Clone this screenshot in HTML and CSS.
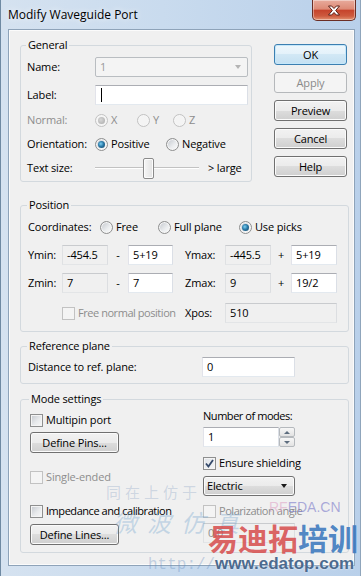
FILE: index.html
```html
<!DOCTYPE html>
<html lang="en">
<head>
    <meta charset="UTF-8">
    <meta name="viewport" content="width=device-width, initial-scale=1.0">
    <title>Modify Waveguide Port</title>
    <link rel="stylesheet" href="styles.css">
</head>
<body>
    <div class="window">
        <div class="titlebar">
            <span class="title">Modify Waveguide Port</span>
            <button class="close" aria-label="Close">
                <svg width="14" height="11" viewBox="0 0 14 11">
                    <path d="M1.5 1 H4.6 L7 3.5 L9.4 1 H12.5 L8.7 5.5 L12.5 10 H9.4 L7 7.5 L4.6 10 H1.5 L5.3 5.5 Z" fill="#fff" stroke="#5a1e14" stroke-width="1" stroke-linejoin="round"/>
                </svg>
            </button>
        </div>

        <div class="client">
            <div class="top">
                <fieldset class="group general">
                    <legend>General</legend>
                    <div class="row">
                        <span class="label">Name:</span>
                        <div class="combo disabled"><span>1</span><span class="arrow"></span></div>
                    </div>
                    <div class="row mt8">
                        <span class="label">Label:</span>
                        <div class="field"><span class="caret"></span></div>
                    </div>
                    <div class="row mt5">
                        <span class="label gray">Normal:</span>
                        <div class="options">
                            <span class="opt w42"><span class="radio checked disabled"></span><span class="gray">X</span></span>
                            <span class="opt w36"><span class="radio disabled"></span><span class="gray">Y</span></span>
                            <span class="opt"><span class="radio disabled"></span><span class="gray">Z</span></span>
                        </div>
                    </div>
                    <div class="row mt4">
                        <span class="label">Orientation:</span>
                        <div class="options">
                            <span class="opt w71"><span class="radio checked"></span>Positive</span>
                            <span class="opt"><span class="radio"></span>Negative</span>
                        </div>
                    </div>
                    <div class="row slider-row mt3">
                        <span class="label">Text size:</span>
                        <div class="options">
                            <div class="slider"><span class="thumb"></span></div>
                            <span class="slider-text">&gt; large</span>
                        </div>
                    </div>
                </fieldset>

                <div class="buttons">
                    <button class="btn default">OK</button>
                    <button class="btn" disabled>Apply</button>
                    <button class="btn">Preview</button>
                    <button class="btn">Cancel</button>
                    <button class="btn">Help</button>
                </div>
            </div>

            <fieldset class="group position">
                <legend>Position</legend>
                <div class="coords">
                    <span class="coords-label">Coordinates:</span>
                    <span class="opt w58"><span class="radio"></span>Free</span>
                    <span class="opt w81"><span class="radio"></span>Full plane</span>
                    <span class="opt"><span class="radio checked"></span>Use picks</span>
                </div>
                <div class="range mt8">
                    <span>Ymin:</span>
                    <div class="field ro">-454.5</div>
                    <span class="op">-</span>
                    <div class="field">5+19</div>
                    <span class="range-label">Ymax:</span>
                    <div class="field ro">-445.5</div>
                    <span class="op">+</span>
                    <div class="field">5+19</div>
                </div>
                <div class="range mt8">
                    <span>Zmin:</span>
                    <div class="field ro">7</div>
                    <span class="op">-</span>
                    <div class="field">7</div>
                    <span class="range-label">Zmax:</span>
                    <div class="field ro">9</div>
                    <span class="op">+</span>
                    <div class="field">19/2</div>
                </div>
                <div class="range xpos mt10">
                    <span></span>
                    <span class="opt"><span class="check disabled"></span><span class="gray tight">Free normal position</span></span>
                    <span class="range-label">Xpos:</span>
                    <div class="field ro">510</div>
                </div>
            </fieldset>

            <fieldset class="group refplane">
                <legend>Reference plane</legend>
                <div class="ref-row">
                    <span class="ref-label">Distance to ref. plane:</span>
                    <div class="field">0</div>
                </div>
            </fieldset>

            <fieldset class="group modes">
                <legend>Mode settings</legend>
                <div class="mode-cols">
                    <div class="mode-left">
                        <span class="opt line mt5"><span class="check"></span>Multipin port</span>
                        <button class="btn wide mt4">Define Pins...</button>
                        <span class="opt line mt16"><span class="check disabled"></span><span class="gray">Single-ended</span></span>
                        <span class="opt line mt18"><span class="check"></span><span class="tight">Impedance and calibration</span></span>
                        <button class="btn wide mt5">Define Lines...</button>
                    </div>
                    <div class="mode-right">
                        <span class="line tight mt1">Number of modes:</span>
                        <div class="spin mt3">
                            <div class="field">1</div>
                            <div class="spin-btns">
                                <span class="spin-btn up"></span>
                                <span class="spin-btn down"></span>
                            </div>
                        </div>
                        <span class="opt line mt8"><span class="check checked"><svg width="9" height="9" viewBox="0 0 9 9"><path d="M1 4.5 L3.4 7.5 L8 1" fill="none" stroke="#34496a" stroke-width="1.8"/></svg></span>Ensure shielding</span>
                        <div class="dropdown mt5"><span>Electric</span><span class="arrow dark"></span></div>
                        <span class="opt line mt7"><span class="check disabled"></span><span class="gray tight">Polarization angle</span></span>
                        <div class="field ro gray mt4">0.0</div>
                    </div>
                </div>
            </fieldset>
        </div>

        <div class="watermark">
            <span class="wm-small">同在上仿于</span>
            <span class="wm-faint">微波仿真</span>
            <span class="wm-site">RF<b>EDA.CN</b></span>
            <span class="wm-big"><em>易迪拓</em>培训</span>
            <span class="wm-http">http://</span>
            <span class="wm-url">www.edatop.com</span>
        </div>
    </div>
</body>
</html>
```

FILE: styles.css
```css
* {
    box-sizing: border-box;
}

body {
    margin: 0;
    font-family: "Open Sans", "Noto Sans", sans-serif;
    font-size: 11px;
    line-height: 16px;
    letter-spacing: -0.15px;
    color: #000;
}

.tight {
    letter-spacing: -0.45px;
}

.window {
    position: relative;
    width: 361px;
    height: 576px;
    overflow: hidden;
    display: flex;
    flex-direction: column;
    background: linear-gradient(to right, #d5e2f0 0%, #c9dbee 45%, #b9d0ea 100%);
    border-left: 1px solid #6f8aa3;
    border-right: 1px solid #8fa5bb;
}

/* title bar */
.titlebar {
    height: 29px;
    display: flex;
    align-items: flex-start;
}

.title {
    padding: 7px 0 0 7px;
    font-size: 12px;
    letter-spacing: 0;
    text-shadow: 0 0 6px #fff;
}

.close {
    margin-left: auto;
    margin-right: 4px;
    width: 44px;
    height: 21px;
    padding: 0;
    display: flex;
    align-items: center;
    justify-content: center;
    border: 1px solid #6b2e25;
    border-top: none;
    border-radius: 0 0 5px 5px;
    background: linear-gradient(#e8ab9c 0%, #dd8a76 45%, #c6442c 52%, #cd5a3e 80%, #e39372 100%);
    box-shadow: inset 0 0 0 1px rgba(255, 255, 255, 0.4);
}

/* client area */
.client {
    height: 537px;
    margin: 0 5px 0 7px;
    padding: 0 4px 0 11px;
    background: #f0f0f0;
    border: 1px solid #8ea3b9;
    box-shadow: inset 0 0 0 1px #fbfbfb;
}

.top {
    display: flex;
    align-items: flex-start;
    margin-top: 7px;
}

.group {
    margin: 0;
    border: 1px solid #d3d9de;
    border-radius: 3px;
    min-width: 0;
}

.group legend {
    padding: 0 2px;
    margin-left: -1px;
    line-height: 16px;
}

.general {
    width: 232px;
    padding: 4px 3px 2px 6px;
}

.buttons {
    display: flex;
    flex-direction: column;
    gap: 7px;
    margin-left: 22px;
    padding-top: 7px;
}

.buttons .btn {
    width: 73px;
}

.row {
    display: grid;
    grid-template-columns: 68px 1fr;
    align-items: center;
    height: 20px;
}

.slider-row {
    height: 22px;
}

.options {
    display: flex;
    align-items: center;
}

.opt {
    display: inline-flex;
    align-items: center;
    gap: 3px;
    white-space: nowrap;
}

.w36 { width: 36px; }
.w42 { width: 42px; }
.w58 { width: 58px; }
.w71 { width: 71px; }
.w81 { width: 81px; }

.mt1 { margin-top: 1px; }
.mt3 { margin-top: 3px; }
.mt4 { margin-top: 4px; }
.mt5 { margin-top: 5px; }
.mt7 { margin-top: 7px; }
.mt8 { margin-top: 8px; }
.mt10 { margin-top: 10px; }
.mt16 { margin-top: 16px; }
.mt18 { margin-top: 18px; }

.gray {
    color: #8d8d8d;
}

/* text fields */
.field {
    height: 20px;
    padding: 0 4px;
    line-height: 18px;
    background: #fff;
    border: 1px solid;
    border-color: #abadb3 #dbdfe6 #e3e9ef #e2e3ea;
    white-space: nowrap;
    overflow: hidden;
}

.field.ro {
    background: #f0f0f0;
    border-color: #c9cbce #dcdee1 #e3e5e7 #dfe1e3;
}

.caret {
    display: inline-block;
    width: 1px;
    height: 14px;
    margin-top: 2px;
    margin-left: 1px;
    background: #000;
    vertical-align: top;
}

.combo {
    height: 20px;
    display: flex;
    align-items: center;
    justify-content: space-between;
    padding: 0 6px 0 4px;
    border: 1px solid #b9bdc1;
    border-radius: 2px;
    background: #f4f4f4;
}

.combo.disabled {
    color: #9a9a9a;
}

.arrow {
    width: 0;
    height: 0;
    border-left: 3.5px solid transparent;
    border-right: 3.5px solid transparent;
    border-top: 4px solid #b4b4b4;
}

.arrow.dark {
    border-top-color: #1a1a1a;
}

/* buttons */
.btn {
    height: 21px;
    padding: 0;
    font: inherit;
    letter-spacing: inherit;
    color: #000;
    border: 1px solid #707070;
    border-radius: 3px;
    background: linear-gradient(#f2f2f2 0%, #ebebeb 50%, #dddddd 50%, #cfcfcf 100%);
    box-shadow: inset 0 0 0 1px #fbfbfb;
}

.btn.default {
    border-color: #3c7fb1;
    box-shadow: inset 0 0 0 1px #c5e7fa;
    background: linear-gradient(#eef7fc 0%, #e3f1fa 50%, #d2e8f5 50%, #c4e0f2 100%);
}

.btn:disabled {
    color: #8a8a8a;
    border-color: #b5b8bb;
    background: #f4f4f4;
    box-shadow: none;
}

.btn.wide {
    width: 89px;
}

/* radios and checks */
.radio {
    position: relative;
    width: 13px;
    height: 13px;
    flex: none;
    border-radius: 50%;
    border: 1px solid #8e8f8f;
    background: linear-gradient(135deg, #c2c6cc 0%, #eceef0 60%, #fbfbfb 100%);
    box-shadow: inset 0 0 0 1px #f6f6f6;
}

.radio.checked::after {
    content: "";
    position: absolute;
    left: 2px;
    top: 2px;
    width: 7px;
    height: 7px;
    border-radius: 50%;
    background: radial-gradient(circle at 40% 40%, #7ed0f2 0%, #2a7aa8 45%, #123f5d 100%);
}

.radio.disabled {
    border-color: #c2c2c2;
    background: #f4f4f4;
}

.radio.disabled.checked::after {
    background: radial-gradient(circle at 40% 40%, #d8d8d8 0%, #a8a8a8 100%);
}

.check {
    width: 13px;
    height: 13px;
    flex: none;
    display: flex;
    align-items: center;
    justify-content: center;
    border: 1px solid #8e8f8f;
    background: linear-gradient(135deg, #c4c8ce 0%, #e8eaec 55%, #f8f8f8 100%);
    box-shadow: inset 0 0 0 1px #f4f4f4;
}

.check.checked {
    background: linear-gradient(135deg, #dfe3e8 0%, #f4f5f6 100%);
}

.check.disabled {
    border-color: #c2c2c2;
    background: #f4f4f4;
}

/* slider */
.slider {
    width: 104px;
    height: 22px;
    display: flex;
    align-items: center;
    background: linear-gradient(to bottom, transparent 10px, #c2c2c2 10px, #c2c2c2 11px, #ffffff 11px, #ffffff 12px, transparent 12px);
}

.thumb {
    width: 11px;
    height: 21px;
    margin-left: 48px;
    border: 1px solid #8a8a8a;
    border-radius: 2px;
    background: linear-gradient(to right, #f6f6f6, #e2e2e2);
    box-shadow: inset 0 0 0 1px #fcfcfc;
}

.slider-text {
    margin-left: 9px;
}

/* position */
.position {
    margin-top: 15px;
    width: 329px;
    padding: 4px 0 8px 7px;
}

.coords {
    display: flex;
    align-items: center;
    height: 20px;
}

.coords-label {
    width: 72px;
}

.range {
    display: grid;
    grid-template-columns: 34px 46px 20px 45px 52px 46px 20px 46px;
    align-items: center;
    height: 20px;
}

.range.xpos {
    grid-template-columns: 34px 111px 52px 112px;
}

.op {
    text-align: center;
}

.range-label {
    padding-left: 12px;
}

/* reference plane */
.refplane {
    margin-top: 6px;
    width: 329px;
    padding: 3px 0 6px 7px;
}

.ref-row {
    display: flex;
    align-items: center;
}

.ref-label {
    width: 174px;
}

.ref-row .field {
    width: 93px;
}

/* mode settings */
.modes {
    margin-top: 7px;
    width: 329px;
    padding: 0 0 7px 9px;
}

.mode-cols {
    display: grid;
    grid-template-columns: 173px 92px;
}

.mode-left,
.mode-right {
    display: flex;
    flex-direction: column;
    align-items: flex-start;
}

.line {
    height: 16px;
    white-space: nowrap;
}

.mode-right > .field,
.mode-right .dropdown,
.spin {
    width: 92px;
}

.spin {
    display: flex;
    height: 20px;
}

.spin .field {
    flex: 1;
}

.spin-btns {
    width: 16px;
    display: flex;
    flex-direction: column;
}

.spin-btn {
    flex: 1;
    display: flex;
    align-items: center;
    justify-content: center;
    border: 1px solid #b5b9bd;
    border-radius: 2px;
    background: linear-gradient(#f7f7f7, #e3e3e3);
}

.spin-btn::after {
    content: "";
    border-left: 3px solid transparent;
    border-right: 3px solid transparent;
}

.spin-btn.up::after {
    border-bottom: 3px solid #5d6d7e;
}

.spin-btn.down::after {
    border-top: 3px solid #5d6d7e;
}

.dropdown {
    height: 20px;
    display: flex;
    align-items: center;
    justify-content: space-between;
    padding: 0 7px 0 3px;
    border: 1px solid #707070;
    border-radius: 3px;
    background: linear-gradient(#f2f2f2 0%, #ebebeb 50%, #dddddd 50%, #cfcfcf 100%);
    box-shadow: inset 0 0 0 1px #fbfbfb;
}

/* watermark over the dialog */
.watermark span {
    position: absolute;
    white-space: nowrap;
    pointer-events: none;
    letter-spacing: 0;
    font-family: "Noto Sans CJK SC", sans-serif;
}

.watermark .wm-small {
    left: 105px;
    top: 484px;
    font-size: 15px;
    letter-spacing: 4px;
    color: rgba(120, 150, 190, 0.3);
}

.watermark .wm-faint {
    left: 112px;
    top: 514px;
    font-size: 24px;
    letter-spacing: 10px;
    font-style: italic;
    color: rgba(110, 160, 205, 0.35);
}

.watermark .wm-site {
    left: 268px;
    top: 499px;
    font-family: "Liberation Sans", sans-serif;
    font-size: 14px;
    color: rgba(220, 150, 190, 0.5);
}

.wm-site b {
    font-weight: normal;
    color: rgba(120, 120, 200, 0.6);
}

.wm-big {
    left: 207px;
    top: 517px;
    font-size: 30px;
    line-height: 40px;
    font-weight: 700;
    color: rgba(60, 120, 190, 0.9);
}

.wm-big em {
    font-style: normal;
    color: rgba(215, 75, 75, 0.85);
}

.watermark .wm-http {
    left: 147px;
    top: 557px;
    font-family: "Liberation Mono", monospace;
    font-size: 16px;
    color: rgba(100, 140, 190, 0.35);
}

.watermark .wm-url {
    left: 214px;
    top: 556px;
    font-family: "Liberation Sans", sans-serif;
    font-size: 17px;
    font-weight: 700;
    color: #4d6b8f;
    text-shadow: 0 0 2px #fff;
}
```
